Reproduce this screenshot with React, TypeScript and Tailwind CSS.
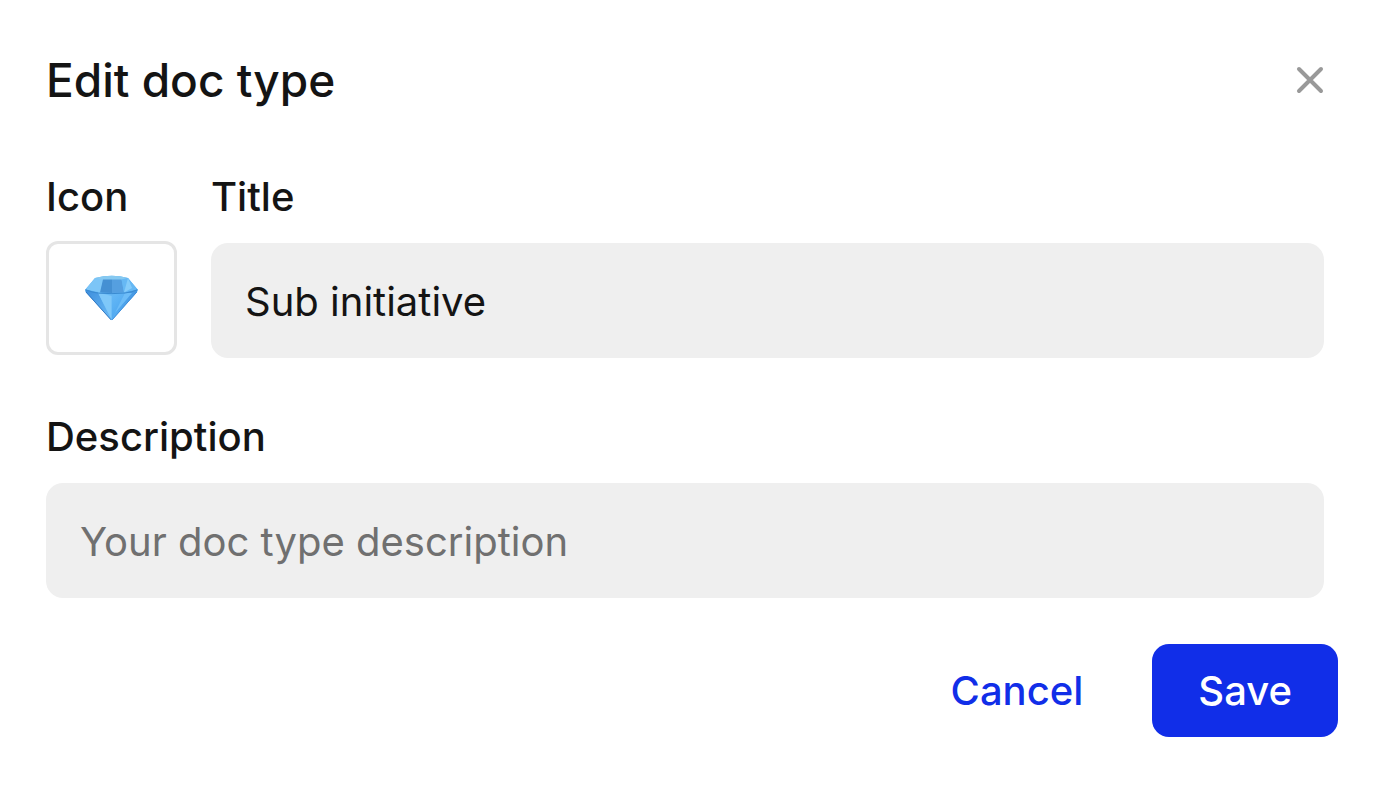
import { useState } from "react";

function GemIcon() {
  return (
    <svg width="54" height="48" viewBox="0 0 54 48" aria-hidden="true">
      <defs>
        <linearGradient id="gem-left" x1="0" y1="0" x2="1" y2="1">
          <stop offset="0" stopColor="#3c8ddb" />
          <stop offset="1" stopColor="#6cbcf7" />
        </linearGradient>
        <linearGradient id="gem-center" x1="0" y1="0" x2="1" y2="1">
          <stop offset="0" stopColor="#74c0f7" />
          <stop offset="0.5" stopColor="#5cb2f4" />
          <stop offset="1" stopColor="#469fec" />
        </linearGradient>
        <linearGradient id="gem-right" x1="1" y1="0" x2="0" y2="1">
          <stop offset="0" stopColor="#4496e0" />
          <stop offset="1" stopColor="#58b0f5" />
        </linearGradient>
      </defs>
      <path d="M10 4Q27-.4 43 4L52.6 15.5Q53 17 51.8 18.2L27.6 45.6Q26.6 46.6 25.6 45.6L.9 18.2Q-.1 17 .4 15.5Z" fill="#61b5f3" />
      <path d="M10 4L18.5 5.5 15.5 18.5 .4 15.5Z" fill="#7cc5f7" />
      <path d="M10 4Q27-.4 43 4L36.5 6H18Z" fill="#86c9f1" />
      <path d="M18 5.5H27V19L15 18.5Z" fill="#4590d3" />
      <path d="M27 5.5H36.5L39 18.5 27 19Z" fill="#559fe0" />
      <path d="M43 4L52.6 15.5 39 18.5 36.5 5.5Z" fill="#66b8f4" />
      <path d="M43 4L47 14 39 18.5Z" fill="#85ccfa" />
      <path d="M.4 15.5L13 18.5 26.6 46.2 .9 18.2Z" fill="url(#gem-left)" />
      <path d="M13 18.5Q27 20.5 40 18.5L26.6 46.2Z" fill="url(#gem-center)" />
      <path d="M13 18.5L26.6 22V46Z" fill="#7fc8f9" />
      <path d="M52.6 15.5L40 18.5 26.6 46.2 51.8 18.2Z" fill="url(#gem-right)" />
      <path d="M40 18.5L47 19 30 39Z" fill="#6dbdf8" />
      <path d="M.6 15.8Q8 18.8 14 19.2Q27 20.2 40 19Q47 18.2 52.4 15.8" fill="none" stroke="#3a8bd1" strokeWidth="1" />
      <path d="M1 18L26 45.8" fill="none" stroke="#3279c4" strokeWidth="1" />
      <path d="M51.8 18L27.2 45.8" fill="none" stroke="#408fdc" strokeWidth="1" />
    </svg>
  );
}

function CloseIcon() {
  return (
    <svg width="28" height="28" viewBox="0 0 28 28" fill="none" stroke="#999999" strokeWidth="4" strokeLinecap="round" aria-hidden="true">
      <path d="M3 3L25 25M25 3L3 25" />
    </svg>
  );
}

const labelClass = "text-[40px] leading-[48px] font-medium";
const inputClass =
  "h-[115px] w-full rounded-[17px] bg-[#efefef] px-[34px] pt-[2px] text-[40px] leading-[48px] text-[#141414] placeholder:text-[#707070] outline-none";

export default function App() {
  const [title, setTitle] = useState("Sub initiative");
  const [description, setDescription] = useState("");

  return (
    <main
      role="dialog"
      aria-labelledby="dialog-title"
      className="min-h-screen bg-white py-[52px] pr-[47px] pl-[46px] font-['Inter',sans-serif] text-[#141414]"
    >
      <form onSubmit={(event) => event.preventDefault()}>
        <div className="pr-[14px]">
          <header className="flex items-center justify-between">
            <h1 id="dialog-title" className="text-[46px] leading-[56px] font-medium">
              Edit doc type
            </h1>
            <button type="button" aria-label="Close" className="cursor-pointer">
              <CloseIcon />
            </button>
          </header>

          <div className="mt-[65px] flex items-start gap-[34px]">
            <div className="flex flex-col gap-5">
              <label htmlFor="doc-icon" className={labelClass}>
                Icon
              </label>
              <button
                id="doc-icon"
                type="button"
                className="flex h-[114px] w-[131px] cursor-pointer items-center justify-center rounded-[12px] border-[3px] border-[#e5e5e5] bg-white"
              >
                <GemIcon />
              </button>
            </div>
            <div className="flex min-w-0 flex-1 flex-col gap-[22px]">
              <label htmlFor="doc-title" className={labelClass}>
                Title
              </label>
              <input
                id="doc-title"
                type="text"
                value={title}
                onChange={(event) => setTitle(event.target.value)}
                className={inputClass}
              />
            </div>
          </div>

          <div className="mt-[55px] flex flex-col gap-[22px]">
            <label htmlFor="doc-description" className={labelClass}>
              Description
            </label>
            <input
              id="doc-description"
              type="text"
              placeholder="Your doc type description"
              value={description}
              onChange={(event) => setDescription(event.target.value)}
              className={inputClass}
            />
          </div>
        </div>

        <footer className="mt-[46px] flex justify-end gap-6">
          <button
            type="button"
            className="h-[93px] cursor-pointer rounded-[17px] px-[45px] text-[40px] leading-[48px] font-medium text-[#112ee8]"
          >
            Cancel
          </button>
          <button
            type="submit"
            className="h-[93px] cursor-pointer rounded-[17px] bg-[#112ee8] px-[46px] text-[40px] leading-[48px] font-medium text-white"
          >
            Save
          </button>
        </footer>
      </form>
    </main>
  );
}
